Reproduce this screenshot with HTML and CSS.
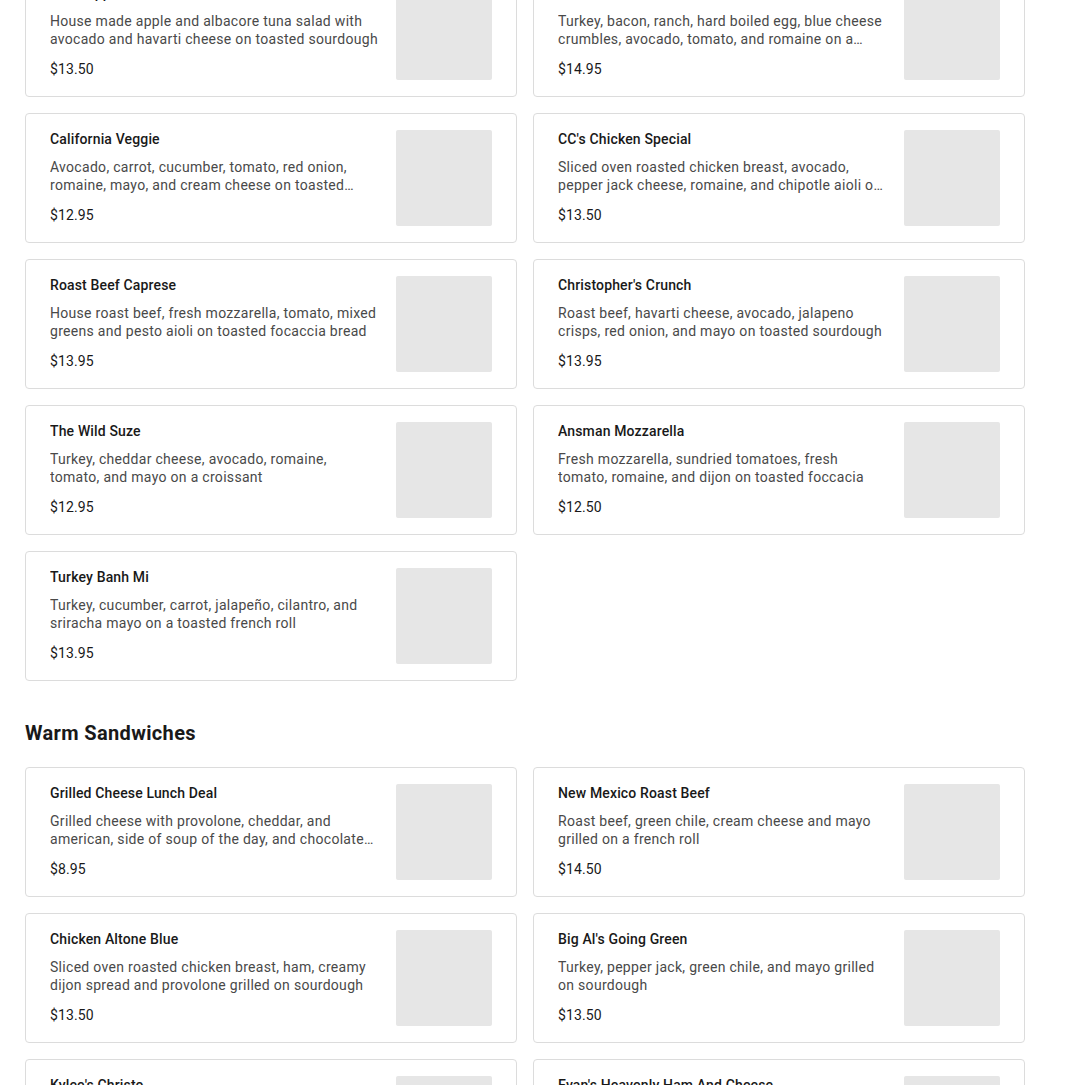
FILE: index.html
```html
<!DOCTYPE html>
<html>
<head>
<meta charset="utf-8">
<link rel="stylesheet" href="styles.css">
</head>
<body>
<main class="menu">
  <section class="category">
    <div class="grid">
      <div class="card"><div class="info"><div class="name">Tuna Apple Salad</div><div class="desc">House made apple and albacore tuna salad with avocado and havarti cheese on toasted sourdough</div><div class="price">$13.50</div></div><div class="thumb"></div></div>
      <div class="card"><div class="info"><div class="name">The Cobb Croissant Club</div><div class="desc">Turkey, bacon, ranch, hard boiled egg, blue cheese crumbles, avocado, tomato, and romaine on a croissant</div><div class="price">$14.95</div></div><div class="thumb"></div></div>
      <div class="card"><div class="info"><div class="name">California Veggie</div><div class="desc">Avocado, carrot, cucumber, tomato, red onion, romaine, mayo, and cream cheese on toasted sourdough</div><div class="price">$12.95</div></div><div class="thumb"></div></div>
      <div class="card"><div class="info"><div class="name">CC's Chicken Special</div><div class="desc">Sliced oven roasted chicken breast, avocado, pepper jack cheese, romaine, and chipotle aioli on toasted focaccia</div><div class="price">$13.50</div></div><div class="thumb"></div></div>
      <div class="card"><div class="info"><div class="name">Roast Beef Caprese</div><div class="desc">House roast beef, fresh mozzarella, tomato, mixed greens and pesto aioli on toasted focaccia bread</div><div class="price">$13.95</div></div><div class="thumb"></div></div>
      <div class="card"><div class="info"><div class="name">Christopher's Crunch</div><div class="desc">Roast beef, havarti cheese, avocado, jalapeno crisps, red onion, and mayo on toasted sourdough</div><div class="price">$13.95</div></div><div class="thumb"></div></div>
      <div class="card"><div class="info"><div class="name">The Wild Suze</div><div class="desc">Turkey, cheddar cheese, avocado, romaine, tomato, and mayo on a croissant</div><div class="price">$12.95</div></div><div class="thumb"></div></div>
      <div class="card"><div class="info"><div class="name">Ansman Mozzarella</div><div class="desc">Fresh mozzarella, sundried tomatoes, fresh tomato, romaine, and dijon on toasted foccacia</div><div class="price">$12.50</div></div><div class="thumb"></div></div>
      <div class="card"><div class="info"><div class="name">Turkey Banh Mi</div><div class="desc">Turkey, cucumber, carrot, jalapeño, cilantro, and sriracha mayo on a toasted french roll</div><div class="price">$13.95</div></div><div class="thumb"></div></div>
    </div>
  </section>
  <section class="category">
    <h2 class="cat-title">Warm Sandwiches</h2>
    <div class="grid">
      <div class="card"><div class="info"><div class="name">Grilled Cheese Lunch Deal</div><div class="desc">Grilled cheese with provolone, cheddar, and american, side of soup of the day, and chocolate chip cookie</div><div class="price">$8.95</div></div><div class="thumb"></div></div>
      <div class="card"><div class="info"><div class="name">New Mexico Roast Beef</div><div class="desc">Roast beef, green chile, cream cheese and mayo grilled on a french roll</div><div class="price">$14.50</div></div><div class="thumb"></div></div>
      <div class="card"><div class="info"><div class="name">Chicken Altone Blue</div><div class="desc">Sliced oven roasted chicken breast, ham, creamy dijon spread and provolone grilled on sourdough</div><div class="price">$13.50</div></div><div class="thumb"></div></div>
      <div class="card"><div class="info"><div class="name">Big Al's Going Green</div><div class="desc">Turkey, pepper jack, green chile, and mayo grilled on sourdough</div><div class="price">$13.50</div></div><div class="thumb"></div></div>
      <div class="card"><div class="info"><div class="name">Kylee's Christo</div><div class="desc">Turkey, ham, swiss cheese, and raspberry jam grilled on french toast</div><div class="price">$13.95</div></div><div class="thumb"></div></div>
      <div class="card"><div class="info"><div class="name">Evan's Heavenly Ham And Cheese</div><div class="desc">Ham, swiss, cheddar, and honey mustard grilled on sourdough</div><div class="price">$12.95</div></div><div class="thumb"></div></div>
    </div>
  </section>
</main>
</body>
</html>
```
FILE: styles.css
```css
* { box-sizing: border-box; }
html, body { margin: 0; padding: 0; background: #fff; }
body {
  font-family: Roboto, "Liberation Sans", sans-serif;
  color: #191919;
  overflow: hidden;
}
.menu {
  width: 1000px;
  margin: -33px 0 0 25px;
}
.grid {
  display: grid;
  grid-template-columns: 492px 492px;
  gap: 16px;
}
.card {
  height: 130px;
  border: 1px solid #dcdcdc;
  border-radius: 4px;
  padding: 16px 24px 16px 24px;
  display: flex;
  gap: 16px;
}
.info {
  flex: 1;
  min-width: 0;
  display: flex;
  flex-direction: column;
}
.name {
  font-size: 14px;
  font-weight: 500;
  line-height: 18px;
  letter-spacing: 0.15px;
  color: #191919;
  white-space: nowrap;
  overflow: hidden;
  text-overflow: ellipsis;
}
.desc {
  margin-top: 10px;
  font-size: 14px;
  line-height: 18px;
  letter-spacing: 0.3px;
  color: #494949;
  display: -webkit-box;
  -webkit-line-clamp: 2;
  -webkit-box-orient: vertical;
  overflow: hidden;
}
.price {
  margin-top: 12px;
  font-size: 14px;
  line-height: 18px;
  letter-spacing: 0.1px;
  color: #191919;
}
.thumb {
  width: 96px;
  height: 96px;
  flex: none;
  background: #e6e6e6;
  border-radius: 2px;
}
.cat-title {
  margin: 40px 0 22px;
  font-size: 20px;
  line-height: 24px;
  font-weight: 700;
  letter-spacing: 0.35px;
  color: #191919;
}
```
